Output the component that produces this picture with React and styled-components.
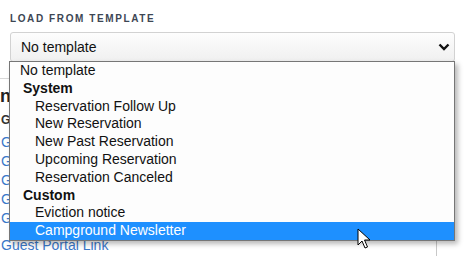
import React from 'react'
import styled, { createGlobalStyle } from 'styled-components'

const Global = createGlobalStyle`
    body {
        margin: 0;
        background: #ffffff;
        font-family: "Liberation Sans", Arial, sans-serif;
    }
`;

const Page = styled.div`
    position: relative;
    width: 473px;
    height: 256px;
    overflow: hidden;
    background: #ffffff;
`;

const Field = styled.div`
    padding: 12px 18px 0 10px;
`;

const Label = styled.div`
    font-size: 10px;
    font-weight: 700;
    letter-spacing: 1.6px;
    line-height: 14px;
    color: #3d4654;
    margin-bottom: 6px;
`;

const SelectWrap = styled.div`
    position: relative;
    z-index: 2;
`;

const SelectBox = styled.div`
    height: 28px;
    display: flex;
    align-items: center;
    justify-content: space-between;
    padding: 0 4px 0 10px;
    border: 1px solid #d2d2d2;
    border-radius: 3px;
    background: linear-gradient(#fdfdfd, #f0f0f0);
    font-size: 14px;
    color: #111;
`;

const Chevron = () => (
    <svg width="12" height="8" viewBox="0 0 12 8">
        <polyline points="1.5,1.5 6,6 10.5,1.5" fill="none" stroke="#111" strokeWidth="2.4" />
    </svg>
);

const Dropdown = styled.div`
    position: absolute;
    top: calc(100% - 1px);
    left: -1px;
    right: 0;
    border: 1px solid #767676;
    background: #fdfdfd;
    box-shadow: 3px 3px 5px rgba(0, 0, 0, 0.28);
`;

const Option = styled.div`
    height: 17.8px;
    line-height: 17.8px;
    font-size: 14px;
    font-weight: ${({ $group }) => ($group ? 700 : 400)};
    padding-left: ${({ $indent }) => $indent}px;
    color: ${({ $active }) => ($active ? '#ffffff' : '#111')};
    background: ${({ $active }) => ($active ? '#1e90ff' : 'transparent')};
    white-space: nowrap;
`;

const Panel = styled.div`
    margin-top: 16px;
    width: 435px;
    height: 200px;
    border-top: 1px solid #d8d8d8;
    border-right: 1px solid #c8c8c8;
    padding-left: 1px;
`;

const Heading = styled.div`
    font-size: 18px;
    font-weight: 700;
    color: #222;
    margin: 6px 0 0 -6px;
    line-height: 22px;
`;

const SubHeading = styled.div`
    font-size: 12px;
    font-weight: 700;
    color: #333;
    margin-top: 6px;
    line-height: 14px;
`;

const LinkList = styled.div`
    display: flex;
    flex-direction: column;
    gap: 4px;
    margin-top: 8px;
`;

const Link = styled.a`
    font-size: 14px;
    line-height: 15px;
    color: #3b78c9;
    text-decoration: none;
    margin-top: ${({ $gap }) => $gap || 0}px;
`;

const Cursor = styled.svg`
    position: absolute;
    left: 357px;
    top: 228px;
    z-index: 3;
`;

const groups = [
    { name: 'System', items: ['Reservation Follow Up', 'New Reservation', 'New Past Reservation', 'Upcoming Reservation', 'Reservation Canceled'] },
    { name: 'Custom', items: ['Eviction notice', 'Campground Newsletter'] },
];

const links = ['Guest First Name', 'Guest Last Name', 'Guest Email', 'Guest Phone', 'Guest Address'];

const App = () => {
    return (
        <Page>
            <Global />
            <Field>
                <Label>LOAD FROM TEMPLATE</Label>
                <SelectWrap>
                    <SelectBox>
                        No template
                        <Chevron />
                    </SelectBox>
                    <Dropdown>
                        <Option $indent={10}>No template</Option>
                        {groups.map(g => (
                            <React.Fragment key={g.name}>
                                <Option $group $indent={13}>{g.name}</Option>
                                {g.items.map(item => (
                                    <Option key={item} $indent={25} $active={item === 'Campground Newsletter'}>{item}</Option>
                                ))}
                            </React.Fragment>
                        ))}
                    </Dropdown>
                </SelectWrap>
            </Field>
            <Panel>
                <Heading>Insert Fields</Heading>
                <SubHeading>Guest</SubHeading>
                <LinkList>
                    {links.map(l => <Link key={l} href="#">{l}</Link>)}
                    <Link href="#" $gap={8}>Guest Portal Link</Link>
                </LinkList>
            </Panel>
            <Cursor width="14" height="22" viewBox="0 0 14 22">
                <path d="M1 1 L1 17 L5 13 L8 20 L10.5 19 L7.5 12 L13 12 Z" fill="#fff" stroke="#000" strokeWidth="1" strokeLinejoin="round" />
            </Cursor>
        </Page>
    )
}

export default App
